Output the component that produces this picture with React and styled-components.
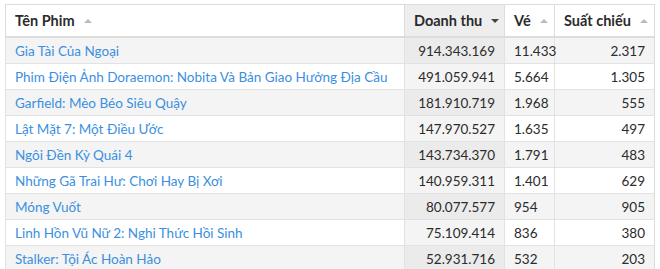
import React from "react";
import styled, { createGlobalStyle } from "styled-components";

const GlobalStyle = createGlobalStyle`
  body {
    margin: 0;
    background: #fff;
    font-family: "Lato", "Liberation Sans", sans-serif;
  }
`;

const movies = [
  ["Gia Tài Của Ngoại", "914.343.169", "11.433", "2.317"],
  ["Phim Điện Ảnh Doraemon: Nobita Và Bản Giao Hưởng Địa Cầu", "491.059.941", "5.664", "1.305"],
  ["Garfield: Mèo Béo Siêu Quậy", "181.910.719", "1.968", "555"],
  ["Lật Mặt 7: Một Điều Ước", "147.970.527", "1.635", "497"],
  ["Ngôi Đền Kỳ Quái 4", "143.734.370", "1.791", "483"],
  ["Những Gã Trai Hư: Chơi Hay Bị Xơi", "140.959.311", "1.401", "629"],
  ["Móng Vuốt", "80.077.577", "954", "905"],
  ["Linh Hồn Vũ Nữ 2: Nghi Thức Hồi Sinh", "75.109.414", "836", "380"],
  ["Stalker: Tội Ác Hoàn Hảo", "52.931.716", "532", "203"],
];

const columns = [
  { label: "Tên Phim", width: 399, dir: "up" },
  { label: "Doanh thu", width: 100, dir: "down", active: true },
  { label: "Vé", width: 50, dir: "up" },
  { label: "Suất chiếu", width: 100, dir: "up" },
];

const Wrap = styled.div`
  padding: 4px 5px 0;
`;

const Table = styled.table`
  width: 650px;
  border-collapse: collapse;
  table-layout: fixed;
  border: 1px solid #dcdcdc;
  font-size: 13.5px;
  color: #2b2b2b;
`;

const Th = styled.th`
  height: 31px;
  padding: 0 6px 0 9px;
  text-align: left;
  font-size: 14.5px;
  font-weight: 700;
  white-space: nowrap;
  background: ${(p) => (p.$active ? "#eeeeee" : "#fff")};
  border-left: 1px solid #dcdcdc;
  border-bottom: 2px solid #dcdcdc;
`;

const Arrow = styled.span`
  display: inline-block;
  margin-left: 9px;
  vertical-align: middle;
  width: 0;
  height: 0;
  border-left: 4px solid transparent;
  border-right: 4px solid transparent;
  ${(p) =>
    p.$dir === "down"
      ? `border-top: 4px solid ${p.$active ? "#444" : "#bbb"};`
      : `border-bottom: 4px solid ${p.$active ? "#444" : "#bbb"};`}
  position: relative;
  top: -1px;
`;

const Row = styled.tr`
  background: ${(p) => (p.$odd ? "#f4f4f4" : "#fff")};
`;

const Td = styled.td`
  height: 25px;
  padding: 0 ${(p) => (p.$num ? "9px" : "2px")} 0 9px;
  white-space: nowrap;
  text-align: ${(p) => (p.$num ? "right" : "left")};
  border-left: 1px solid #e2e2e2;
  border-bottom: 1px solid #e2e2e2;
  background: ${(p) => (p.$active ? (p.$odd ? "#ebebeb" : "#f4f4f4") : "transparent")};
`;

const Title = styled.a`
  color: #3b8fe0;
  text-decoration: none;
`;

export default function App() {
  return (
    <Wrap>
      <GlobalStyle />
      <Table>
        <colgroup>
          {columns.map((c) => (
            <col key={c.label} style={{ width: c.width }} />
          ))}
        </colgroup>
        <thead>
          <tr>
            {columns.map((c) => (
              <Th key={c.label} $active={c.active}>
                {c.label}
                <Arrow $dir={c.dir} $active={c.active} />
              </Th>
            ))}
          </tr>
        </thead>
        <tbody>
          {movies.map((m, i) => (
            <Row key={m[0]} $odd={i % 2 === 0}>
              <Td>
                <Title href="#">{m[0]}</Title>
              </Td>
              <Td $num $active $odd={i % 2 === 0}>
                {m[1]}
              </Td>
              <Td>{m[2]}</Td>
              <Td $num>{m[3]}</Td>
            </Row>
          ))}
        </tbody>
      </Table>
    </Wrap>
  );
}
